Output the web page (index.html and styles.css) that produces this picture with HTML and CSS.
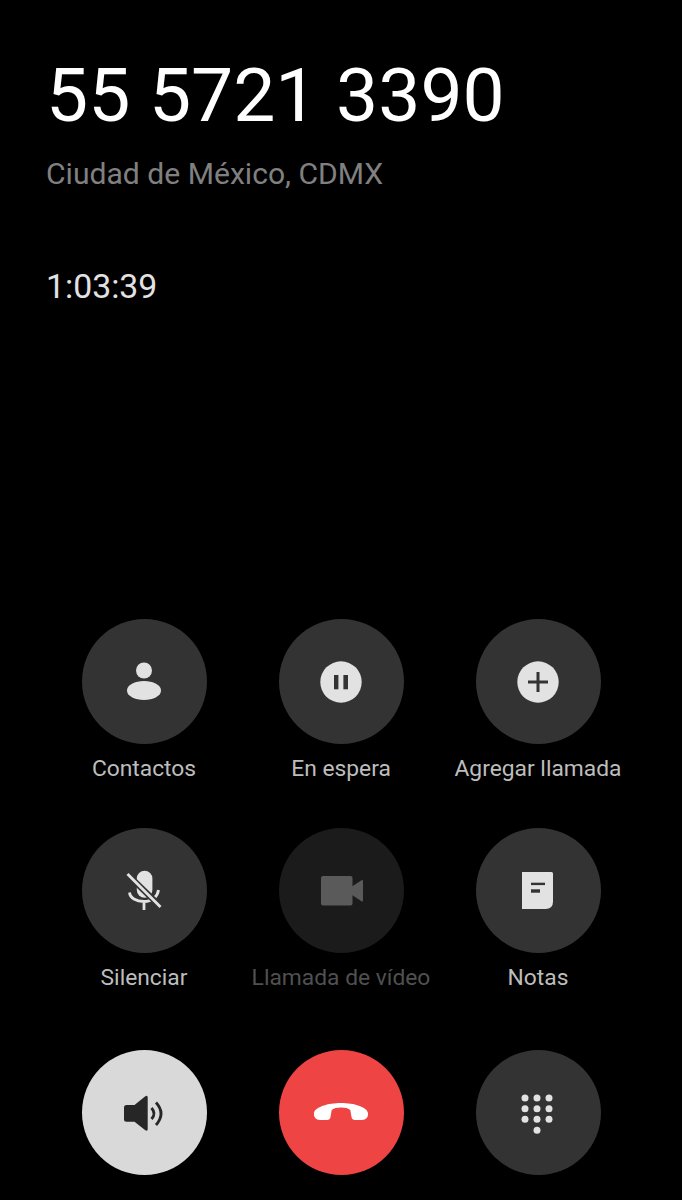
FILE: index.html
```html
<!DOCTYPE html>
<html lang="es">
<head>
<meta charset="utf-8">
<title>Llamada</title>
<link rel="stylesheet" href="styles.css">
</head>
<body>
<main class="call">
  <header class="info">
    <h1 class="number">55 5721 3390</h1>
    <p class="place">Ciudad de México, CDMX</p>
    <p class="timer">1:03:39</p>
  </header>
  <section class="controls">
    <div class="control">
      <div class="disc">
        <svg class="icon" viewBox="-30 -30 60 60"><circle class="ink" cx="0" cy="-11.5" r="8"/><ellipse class="ink" cx="0" cy="8.5" rx="17" ry="9.5"/></svg>
      </div>
      <span class="label">Contactos</span>
    </div>
    <div class="control">
      <div class="disc">
        <svg class="icon" viewBox="-30 -30 60 60"><circle class="ink" r="20.7"/><rect class="cut" x="-7" y="-7" width="4.4" height="14.3"/><rect class="cut" x="2.4" y="-7" width="4.6" height="14.3"/></svg>
      </div>
      <span class="label">En espera</span>
    </div>
    <div class="control">
      <div class="disc">
        <svg class="icon" viewBox="-30 -30 60 60"><circle class="ink" r="20.7"/><rect class="cut" x="-10" y="-1.5" width="20" height="3"/><rect class="cut" x="-1.5" y="-10" width="3" height="20"/></svg>
      </div>
      <span class="label">Agregar llamada</span>
    </div>
    <div class="control">
      <div class="disc">
        <svg class="icon" viewBox="-30 -30 60 60">
          <path class="ink" d="M-7.200 -12.500a7.800 7.800 0 0 1 15.600 0V-1a7.800 7.800 0 0 1 -15.600 0Z"/>
          <path class="line" d="M-14.500 1.500C-14 7 -8 10.500 0 10.500S13.500 6 14.500 -1M0 10.500V19"/>
          <path class="gap" d="M-17 -17L17 16"/>
          <path class="line" d="M-16.500 -17L16.500 16"/>
        </svg>
      </div>
      <span class="label">Silenciar</span>
    </div>
    <div class="control off">
      <div class="disc">
        <svg class="icon" viewBox="-30 -30 60 60"><rect class="ink" x="-20" y="-15" width="31.500" height="29.500" rx="2"/><path class="ink" d="M11 -4.500L20.500 -10.700Q22 -11.500 22 -10V9.500Q22 11 20.500 10.200L11 4Z"/></svg>
      </div>
      <span class="label">Llamada de vídeo</span>
    </div>
    <div class="control">
      <div class="disc">
        <svg class="icon" viewBox="-30 -30 60 60"><path class="ink" d="M-16 -19H13.500Q15 -19 15 -17.500V10.500Q15 18 7.500 18H-16Z"/><rect class="cut" x="-7" y="-8.300" width="14" height="2.400"/><rect class="cut" x="-7" y="-1.700" width="9" height="3.400"/></svg>
      </div>
      <span class="label">Notas</span>
    </div>
    <div class="control">
      <div class="disc light">
        <svg class="icon" viewBox="-30 -30 60 60">
          <path class="dark" d="M-17.500 -8H-9.500L1 -16.500Q3.700 -18.500 3.700 -15.500V16Q3.700 19 1 17L-9.500 8.700H-17.500Q-20 8.700 -20 6.200V-5.500Q-20 -8 -17.500 -8Z"/>
          <path class="wave" d="M7.500 -5Q12.500 0.500 7.500 6"/>
          <path class="wave" d="M12 -10.500Q22 0.500 12 12"/>
        </svg>
      </div>
    </div>
    <div class="control">
      <div class="disc red">
        <svg class="icon" viewBox="-30 -30 60 60"><path class="white" d="M-27 0C-26 -6 -13 -10 0 -10S26 -6 27 0C27.500 4 25 7 21 7H14Q11 7 10.500 4L9.300 -3C6 -6.300 -6 -6.300 -9.300 -3L-10.500 4Q-11 7 -14 7H-21C-25 7 -27.500 4 -27 0Z"/></svg>
      </div>
    </div>
    <div class="control">
      <div class="disc">
        <svg class="icon" viewBox="-30 -30 60 60">
          <circle class="ink" cx="-13" cy="-15" r="3.500"/><circle class="ink" cx="-1" cy="-15" r="3.500"/><circle class="ink" cx="11" cy="-15" r="3.500"/>
          <circle class="ink" cx="-13" cy="-4.300" r="3.500"/><circle class="ink" cx="-1" cy="-4.300" r="3.500"/><circle class="ink" cx="11" cy="-4.300" r="3.500"/>
          <circle class="ink" cx="-13" cy="6.300" r="3.500"/><circle class="ink" cx="-1" cy="6.300" r="3.500"/><circle class="ink" cx="11" cy="6.300" r="3.500"/>
          <circle class="ink" cx="-1" cy="17.300" r="3.500"/>
        </svg>
      </div>
    </div>
  </section>
</main>
</body>
</html>
```
FILE: styles.css
```css
* {
  box-sizing: border-box;
}

html,
body {
  margin: 0;
  height: 100%;
  background: #000;
}

body {
  font-family: Roboto, "Liberation Sans", sans-serif;
  overflow: hidden;
}

.call {
  height: 1200px;
  display: flex;
  flex-direction: column;
}

.info {
  flex: none;
  padding: 52px 0 0 46px;
  height: 619px;
}

.number {
  margin: 0;
  font-size: 75px;
  line-height: 86px;
  font-weight: 400;
  color: #fff;
}

.place {
  margin: 18px 0 0;
  font-size: 30.100px;
  line-height: 36px;
  color: #808080;
}

.timer {
  margin: 75px 0 0;
  font-size: 33.800px;
  line-height: 40px;
  color: #e2e2e2;
}

.controls {
  display: grid;
  grid-template-columns: repeat(3, 197px);
  grid-auto-rows: 209px;
  justify-content: center;
}

.controls .control:nth-child(n + 7) {
  margin-top: 13px;
}

.control {
  display: flex;
  flex-direction: column;
  align-items: center;
}

.disc {
  width: 125px;
  height: 125px;
  flex: none;
  border-radius: 50%;
  background: #333;
  display: flex;
  align-items: center;
  justify-content: center;
}

.disc.light {
  background: #d9d9d9;
}

.disc.red {
  background: #ef4444;
}

.off .disc {
  background: #1b1b1b;
}

.icon {
  width: 60px;
  height: 60px;
  display: block;
}

.ink {
  fill: #e2e2e2;
}

.cut {
  fill: #333;
}

.off .ink {
  fill: #5a5a5a;
}

.line {
  fill: none;
  stroke: #e2e2e2;
  stroke-width: 2.800;
}

.gap {
  fill: none;
  stroke: #333;
  stroke-width: 6;
}

.dark {
  fill: #262626;
}

.wave {
  fill: none;
  stroke: #262626;
  stroke-width: 2.800;
}

.white {
  fill: #fff;
}

.label {
  margin-top: 10px;
  font-size: 22.800px;
  line-height: 30px;
  color: #bdbdbd;
  white-space: nowrap;
}

.off .label {
  color: #505050;
}
```
